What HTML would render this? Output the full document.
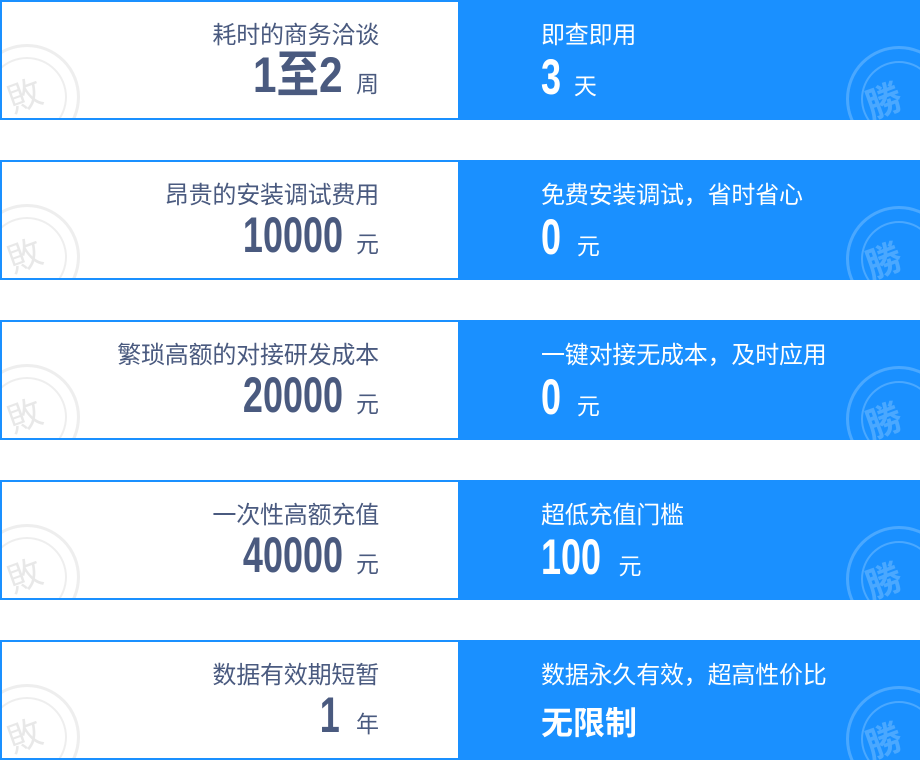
<!DOCTYPE html><html><head><meta charset="utf-8"><style>
body{margin:0;width:922px;height:760px;background:#fff;font-family:"Liberation Sans","Noto Sans CJK SC",sans-serif;overflow:hidden;position:relative}
.row{position:absolute;left:0;width:920px;height:120px}
.l{position:absolute;left:0;top:0;width:456px;height:116px;border:2px solid #1a90ff;background:#fff;overflow:hidden}
.r{position:absolute;left:460px;top:0;width:460px;height:120px;background:#1a90ff;overflow:hidden}
.lt{position:absolute;right:541px;top:15px;font-size:24px;color:#4a5a7f;white-space:nowrap;letter-spacing:-0.2px}
.ln{position:absolute;right:541px;top:50px;color:#4a5a7f;white-space:nowrap}
.rt{position:absolute;left:541px;top:15px;font-size:24px;color:#fff;white-space:nowrap;letter-spacing:-0.2px}
.rn{position:absolute;left:541px;top:52px;color:#fff;white-space:nowrap}
.num{display:inline-block;font-size:50px;font-weight:bold;line-height:50px;transform:scaleX(.72);transform-origin:right center;vertical-align:bottom}
.rn .num{transform-origin:left center}
.u{font-size:23px;display:inline-block;vertical-align:bottom;line-height:32px}
.ln .u{margin-left:13px}
.sl{position:absolute;left:-28px;top:42px;width:100px;height:100px;border-radius:50%;border:3px solid #eee;box-shadow:inset 0 0 0 10px #fff,inset 0 0 0 12px #eee}
.sl span{position:absolute;left:30px;top:22px;font-size:34px;color:#e8e8e8;transform:rotate(-20deg)}
.sr{position:absolute;left:386px;top:46px;width:100px;height:100px;border-radius:50%;border:3px solid #4aa8ff;box-shadow:inset 0 0 0 12px #1a90ff,inset 0 0 0 14px #4aa8ff}
.sr span{position:absolute;left:16px;top:24px;font-size:36px;font-weight:bold;color:#4aa8ff;transform:rotate(-20deg)}
</style></head><body>
<div class="row" style="top:0"><div class="l"><div class="sl"><span>敗</span></div></div><div class="r"><div class="sr"><span>勝</span></div></div>
<div class="lt">耗时的商务洽谈</div><div class="ln"><span class="num" style="transform:scaleX(.85)">1至2</span><span class="u">周</span></div>
<div class="rt">即查即用</div><div class="rn"><span class="num">3</span><span class="u" style="margin-left:5px">天</span></div></div>

<div class="row" style="top:160px"><div class="l"><div class="sl"><span>敗</span></div></div><div class="r"><div class="sr"><span>勝</span></div></div>
<div class="lt">昂贵的安装调试费用</div><div class="ln"><span class="num">10000</span><span class="u">元</span></div>
<div class="rt">免费安装调试，省时省心</div><div class="rn"><span class="num">0</span><span class="u" style="margin-left:8px">元</span></div></div>

<div class="row" style="top:320px"><div class="l"><div class="sl"><span>敗</span></div></div><div class="r"><div class="sr"><span>勝</span></div></div>
<div class="lt">繁琐高额的对接研发成本</div><div class="ln"><span class="num">20000</span><span class="u">元</span></div>
<div class="rt">一键对接无成本，及时应用</div><div class="rn"><span class="num">0</span><span class="u" style="margin-left:8px">元</span></div></div>

<div class="row" style="top:480px"><div class="l"><div class="sl"><span>敗</span></div></div><div class="r"><div class="sr"><span>勝</span></div></div>
<div class="lt">一次性高额充值</div><div class="ln"><span class="num">40000</span><span class="u">元</span></div>
<div class="rt">超低充值门槛</div><div class="rn"><span class="num">100</span><span class="u" style="margin-left:-6px">元</span></div></div>

<div class="row" style="top:640px"><div class="l"><div class="sl"><span>敗</span></div></div><div class="r"><div class="sr"><span>勝</span></div></div>
<div class="lt">数据有效期短暂</div><div class="ln"><span class="num">1</span><span class="u" style="margin-left:16px">年</span></div>
<div class="rt">数据永久有效，超高性价比</div><div class="rn" style="top:58px;font-size:32px;font-weight:bold">无限制</div></div>
</body></html>
